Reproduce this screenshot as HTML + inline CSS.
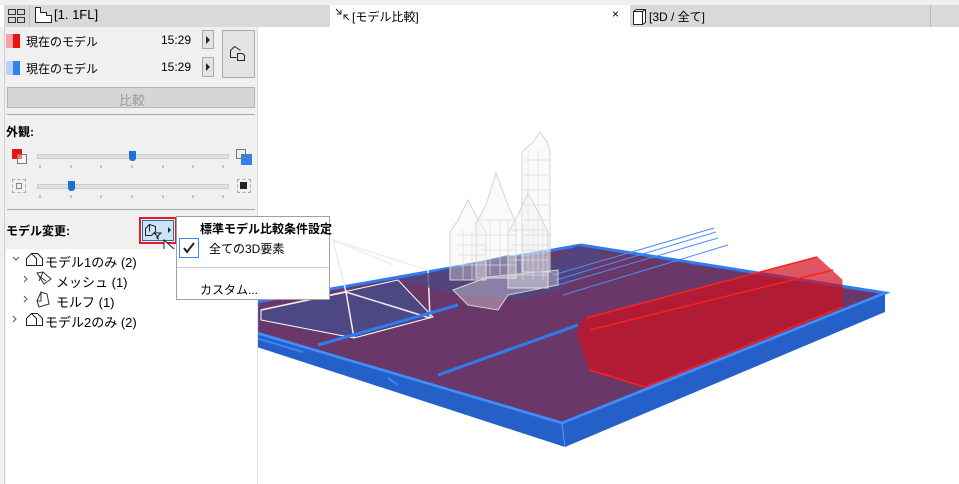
<!DOCTYPE html>
<html><head><meta charset="utf-8"><style>
body{margin:0;width:959px;height:484px;overflow:hidden;background:#fff;font-family:"Liberation Sans","Noto Sans CJK JP",sans-serif;font-size:12px;color:#000;position:relative}
.a{position:absolute}
.txt{white-space:nowrap}
</style></head><body>
<div class="a" style="left:0;top:0;width:959px;height:5px;background:#f0f0f0"></div>
<div class="a" style="left:4px;top:5px;width:955px;height:22px;background:#d9d9d9"></div>
<div class="a" style="left:330px;top:5px;width:300px;height:22px;background:#fff"></div>
<div class="a" style="left:930px;top:5px;width:1px;height:22px;background:#bbb"></div>
<div class="a" style="left:29px;top:6px;width:1px;height:20px;background:#bbb"></div>
<svg class="a" style="left:7px;top:8px" width="20" height="16"><g fill="none" stroke="#333"><rect x="1.5" y="1.5" width="7" height="5"/><rect x="10.5" y="1.5" width="7" height="5"/><rect x="1.5" y="9.5" width="7" height="5"/><rect x="10.5" y="9.5" width="7" height="5"/></g></svg>
<svg class="a" style="left:34px;top:6px" width="20" height="18"><path d="M1.5 16.5V1.5h5v5h6v3h5v7z" fill="#fff" stroke="#222"/></svg>
<div class="a txt" style="left:54px;top:7px;font-size:13px">[1. 1FL]</div>
<svg class="a" style="left:335px;top:8px" width="16" height="14"><path d="M1 1l5 5M6 2v4H2M14 12l-5-5M9 11V7h4" fill="none" stroke="#222"/></svg>
<div class="a txt" style="left:352px;top:8px;font-size:12px">[モデル比較]</div>
<div class="a txt" style="left:612px;top:7px;font-size:12px">×</div>
<svg class="a" style="left:632px;top:8px" width="16" height="17"><path d="M1.5 3.5l3-2h9v13l-3 2h-9z M10.5 3.5v13 M1.5 3.5h9l3-2" fill="#fff" stroke="#222"/></svg>
<div class="a txt" style="left:649px;top:8px;font-size:12px">[3D / 全て]</div>

<div class="a" style="left:0;top:27px;width:257px;height:457px;background:#f0f0f0"></div>
<div class="a" style="left:4px;top:27px;width:1px;height:457px;background:#d0d0d0"></div>
<div class="a" style="left:257px;top:27px;width:1px;height:457px;background:#e0e0e0"></div>
<div class="a" style="left:6px;top:34px;width:7px;height:14px;background:#f5a3a3"></div>
<div class="a" style="left:13px;top:34px;width:7px;height:14px;background:#ee1111"></div>
<div class="a" style="left:6px;top:61px;width:7px;height:14px;background:#b7d3f7"></div>
<div class="a" style="left:13px;top:61px;width:7px;height:14px;background:#3380ee"></div>
<div class="a txt" style="left:26px;top:33px">現在のモデル</div>
<div class="a txt" style="left:26px;top:60px">現在のモデル</div>
<div class="a txt" style="left:161px;top:33px">15:29</div>
<div class="a txt" style="left:161px;top:60px">15:29</div>
<div class="a" style="left:202px;top:30px;width:12px;height:19px;background:#e3e3e3;border:1px solid #aaa;box-sizing:border-box"></div>
<div class="a" style="left:202px;top:57px;width:12px;height:20px;background:#e3e3e3;border:1px solid #aaa;box-sizing:border-box"></div>
<div class="a" style="left:206px;top:36px;border-left:4px solid #222;border-top:4px solid transparent;border-bottom:4px solid transparent"></div>
<div class="a" style="left:206px;top:63px;border-left:4px solid #222;border-top:4px solid transparent;border-bottom:4px solid transparent"></div>
<div class="a" style="left:222px;top:30px;width:33px;height:48px;background:#e3e3e3;border:1px solid #aaa;box-sizing:border-box"></div>
<svg class="a" style="left:229px;top:44px" width="20" height="20"><path d="M1.5 13.5V6.5l4-4 6 4M1.5 13.5h6 M8.5 9.5h5l2 2v5h-7z" fill="none" stroke="#222"/></svg>
<div class="a" style="left:7px;top:87px;width:248px;height:21px;background:#d6d6d6;border:1px solid #b4b4b4;box-sizing:border-box"></div>
<div class="a txt" style="left:119px;top:90px;color:#9a9a9a;font-size:13px">比較</div>
<div class="a" style="left:7px;top:114px;width:248px;height:1px;background:#a8a8a8"></div>
<div class="a txt" style="left:6px;top:123px;font-weight:bold">外観:</div>
<div class="a" style="left:12px;top:149px;width:10px;height:10px;background:#ee1111"></div>
<div class="a" style="left:17px;top:154px;width:10px;height:10px;border:1px solid #777;box-sizing:border-box;background:rgba(255,255,255,.4)"></div>
<div class="a" style="left:241px;top:154px;width:11px;height:11px;background:#3380ee"></div>
<div class="a" style="left:236px;top:149px;width:10px;height:10px;border:1px solid #777;box-sizing:border-box"></div>
<div class="a" style="left:37px;top:154px;width:190px;height:3px;background:#e0e0e0;border:1px solid #ccc"></div>
<div class="a" style="left:37px;top:184px;width:190px;height:3px;background:#e0e0e0;border:1px solid #ccc"></div>
<div class="a" style="left:129px;top:151px;width:7px;height:10px;background:#1a73d0;border-radius:0 0 3px 3px"></div>
<div class="a" style="left:68px;top:181px;width:7px;height:10px;background:#1a73d0;border-radius:0 0 3px 3px"></div>
<svg class="a" style="left:37px;top:164px" width="192" height="36"><g stroke="#999"><path d="M3 1v3M34 1v3M64 1v3M95 1v3M126 1v3M156 1v3M186 1v3M3 31v3M34 31v3M64 31v3M95 31v3M126 31v3M156 31v3M186 31v3"/></g></svg>
<div class="a" style="left:12px;top:179px;width:14px;height:14px;border:1px dashed #aaa;box-sizing:border-box"></div>
<div class="a" style="left:16px;top:183px;width:6px;height:6px;border:1px solid #888;box-sizing:border-box"></div>
<div class="a" style="left:237px;top:179px;width:14px;height:14px;border:1px dashed #aaa;box-sizing:border-box"></div>
<div class="a" style="left:240px;top:182px;width:7px;height:7px;background:#222"></div>
<div class="a" style="left:7px;top:209px;width:248px;height:1px;background:#a8a8a8"></div>
<div class="a txt" style="left:6px;top:222px;font-weight:bold">モデル変更:</div>
<div class="a" style="left:139px;top:217px;width:38px;height:27px;border:2px solid #e02020;box-sizing:border-box"></div>
<div class="a" style="left:142px;top:220px;width:32px;height:21px;background:#cde3f7;border:1px solid #2a6cb5;box-sizing:border-box"></div>
<svg class="a" style="left:144px;top:221px" width="20" height="20"><path d="M1.5 14.5v-7l4-4 6 2v5l-4 4zM5.5 3.5v7M10 12h7l-3 3v3l-1-1v-2z" fill="none" stroke="#222"/></svg>
<div class="a" style="left:168px;top:227px;border-left:3px solid #222;border-top:3px solid transparent;border-bottom:3px solid transparent"></div>
<svg class="a" style="left:163px;top:239px" width="14" height="20"><path d="M1 1v14l3.5-3.5 2.5 5 2-1-2.5-5h5z" fill="#fff" stroke="#222"/></svg>
<div class="a" style="left:6px;top:249px;width:251px;height:235px;background:#fff"></div>
<svg class="a" style="left:10px;top:252px" width="30" height="80"><g fill="none" stroke="#555"><path d="M3 5l3 3 3-3M14 24l3 3-3 3M14 44l3 3-3 3M3 64l3 3-3 3"/></g></svg>
<svg class="a" style="left:25px;top:250px" width="20" height="80"><g fill="none" stroke="#222"><path d="M1.5 15.5v-7l5-5 5 5v7zM6.5 3.5h6l5 5v7h-6"/><path d="M1.5 75.5v-7l5-5 5 5v7zM6.5 63.5h6l5 5v7h-6"/></g></svg>
<svg class="a" style="left:35px;top:270px" width="18" height="40"><g fill="none" stroke="#333"><path d="M2 3l6-1 8 7-7 5zM4 6l7 5M8 2l-4 9"/><path d="M6 22l6 2 2 10-10 3-2-6z M6 22l0 9-4 0"/></g></svg>
<div class="a txt" style="left:45px;top:252px;font-size:13px">モデル1のみ (2)</div>
<div class="a txt" style="left:56px;top:272px;font-size:13px">メッシュ (1)</div>
<div class="a txt" style="left:56px;top:292px;font-size:13px">モルフ (1)</div>
<div class="a txt" style="left:45px;top:312px;font-size:13px">モデル2のみ (2)</div>

<svg class="a" style="left:258px;top:120px" width="701" height="364">
<polygon points="-1,182 323,125 627,173 627,192 307,327 -1,227" fill="#2460c8"/>
<polygon points="-1,182 323,125 627,173 304,303 -1,213" fill="#6a3868" stroke="#2f7cf0" stroke-width="3"/>
<path d="M-1 213 L304 303 L627 173" stroke="#4a8ef5" stroke-width="2" fill="none"/>
<path d="M304 303 L307 327" stroke="#5a9af8"/>
<polygon points="3,190 140,160 175,197 96,218 3,200" fill="#4d4783" stroke="#fff"/>
<path d="M3 190 L88 172 L172 198 M88 172 L96 218 M88 172 L75 120 L170 150 L172 198 M75 120 L135 145" stroke="#eee" stroke-width="1.5" fill="none"/>
<polygon points="140,160 250,135 290,140 320,125 350,135 300,170 260,180 200,175" fill="#4d4783" opacity=".8"/>
<path d="M295 155 L456 108 M300 165 L460 118 M305 175 L470 125 M298 160 L458 112" stroke="#4a8ef5" stroke-width="1" fill="none"/>
<rect x="295" y="147" width="160" height="40" fill="none"/>
<path d="M60 225 L200 185 M180 255 L320 205" stroke="#2f7cf0" stroke-width="3" fill="none"/>
<path d="M-12 215 L45 232 M130 258 L140 265" stroke="#3a86f5" stroke-width="2"/>
<polygon points="320,208 328,198 559,137 584,160 584,187 387,267 332,250 320,215" fill="#d01020" opacity=".7" stroke="#f00"/>
<path d="M328 198 L559 137 M332 210 L575 150 M387 267 L584 187 M332 250 L387 267" stroke="#ff2020" stroke-width="1.5" fill="none"/>
<g fill="#f2f2f2" fill-opacity=".35" stroke="#d4d4d4" stroke-width="1">
<path d="M275 22 l7 -10 7 10 l3 10 v120 h-28 v-120z"/>
<path d="M200 100 l10 -20 10 20 l8 12 v48 h-36 v-48z"/>
<path d="M228 85 l10 -32 12 32 l8 18 v55 h-40 v-55z"/>
<path d="M260 95 l10 -22 12 22 l8 18 v55 h-40 v-55z"/>
<path d="M195 170 L230 157 L300 150 L300 165 L250 175 L240 190 L210 185 z"/>
</g>
<g stroke="#dcdcdc" stroke-width=".7">
<path d="M200 115h28M200 125h28M200 135h28M200 145h28M220 100h38M220 115h38M222 130h36M222 145h36M252 110h38M252 125h38M252 140h38M252 155h38M266 40h26M266 55h26M266 70h26M266 85h26M266 100h26M266 115h26M266 130h26"/>
<path d="M205 110v50M214 110v50M232 100v55M242 100v55M250 100v55M265 105v55M275 105v55M285 105v55M270 30v120M280 30v120"/>
</g>
</svg>

<div class="a" style="left:176px;top:216px;width:154px;height:84px;background:#fff;border:1px solid #a0a0a0;box-sizing:border-box"></div>
<div class="a txt" style="left:200px;top:220px;font-weight:bold">標準モデル比較条件設定</div>
<div class="a" style="left:179px;top:238px;width:20px;height:20px;border:1px solid #3c8ce0;box-sizing:border-box"></div>
<svg class="a" style="left:182px;top:241px" width="14" height="14"><path d="M2 7l3 4 7-9" fill="none" stroke="#222" stroke-width="2"/></svg>
<div class="a txt" style="left:209px;top:240px">全ての3D要素</div>
<div class="a" style="left:177px;top:267px;width:152px;height:1px;background:#ccc"></div>
<div class="a txt" style="left:200px;top:281px">カスタム...</div>
</body></html>
